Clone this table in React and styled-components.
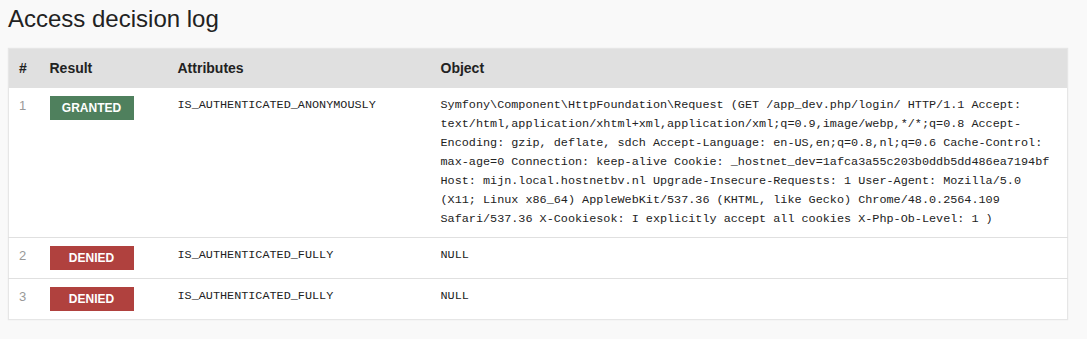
import styled, { createGlobalStyle } from 'styled-components';

const GlobalStyle = createGlobalStyle`
  body {
    margin: 0;
    background: #f9f9f9;
    font-family: 'Liberation Sans', Arial, sans-serif;
    color: #222;
  }
`

const decisions = [
  {
    result: 'GRANTED',
    attributes: 'IS_AUTHENTICATED_ANONYMOUSLY',
    object: 'Symfony\\Component\\HttpFoundation\\Request (GET /app_dev.php/login/ HTTP/1.1 Accept: text/html,application/xhtml+xml,application/xml;q=0.9,image/webp,*/*;q=0.8 Accept-Encoding: gzip, deflate, sdch Accept-Language: en-US,en;q=0.8,nl;q=0.6 Cache-Control: max-age=0 Connection: keep-alive Cookie: _hostnet_dev=1afca3a55c203b0ddb5dd486ea7194bf Host: mijn.local.hostnetbv.nl Upgrade-Insecure-Requests: 1 User-Agent: Mozilla/5.0 (X11; Linux x86_64) AppleWebKit/537.36 (KHTML, like Gecko) Chrome/48.0.2564.109 Safari/537.36 X-Cookiesok: I explicitly accept all cookies X-Php-Ob-Level: 1 )',
  },
  { result: 'DENIED', attributes: 'IS_AUTHENTICATED_FULLY', object: 'NULL' },
  { result: 'DENIED', attributes: 'IS_AUTHENTICATED_FULLY', object: 'NULL' },
];

export default function App() {
  return (
    <Page>
      <GlobalStyle />
      <Title>Access decision log</Title>
      <Table>
        <thead>
          <tr>
            <Th $w={31}>#</Th>
            <Th $w={128}>Result</Th>
            <Th $w={263}>Attributes</Th>
            <Th>Object</Th>
          </tr>
        </thead>
        <tbody>
          {decisions.map((d, i) => (
            <Row key={i}>
              <Num>{i + 1}</Num>
              <Td><Badge $granted={d.result === 'GRANTED'}>{d.result}</Badge></Td>
              <Td><Code>{d.attributes}</Code></Td>
              <Td><Code>{d.object}</Code></Td>
            </Row>
          ))}
        </tbody>
      </Table>
    </Page>
  );
}

const Page = styled.div`
  padding: 5px 8px 20px;
`
const Title = styled.h2`
  margin: 0 0 15px;
  font-size: 24px;
  font-weight: 400;
  line-height: 28px;
  color: #222;
`
const Table = styled.table`
  width: 1060px;
  table-layout: fixed;
  border-collapse: collapse;
  background: #fff;
  border: 1px solid #e6e6e6;
  box-shadow: 0 0 1px rgba(128, 128, 128, 0.2);
`
const Th = styled.th`
  box-sizing: border-box;
  width: ${p => (p.$w ? `${p.$w}px` : 'auto')};
  background: #e0e0e0;
  padding: 10px;
  text-align: left;
  font-size: 14px;
  font-weight: 700;
  line-height: 19px;
  color: #222;
`
const Row = styled.tr`
  & + & {
    border-top: 1px solid #e0e0e0;
  }
`
const Td = styled.td`
  padding: 8px 10px;
  vertical-align: top;
  font-size: 13px;
  line-height: 19px;
`
const Num = styled(Td)`
  color: #999;
  font-size: 13px;
`
const Badge = styled.span`
  display: block;
  width: 84px;
  height: 24px;
  line-height: 24px;
  text-align: center;
  font-size: 12px;
  font-weight: 700;
  color: #fff;
  background: ${p => (p.$granted ? '#4f805d' : '#b0413e')};
`
const Code = styled.code`
  display: block;
  max-width: 87ch;
  font-family: 'Liberation Mono', 'Courier New', monospace;
  font-size: 11.8px;
  line-height: 19px;
  color: #222;
`
